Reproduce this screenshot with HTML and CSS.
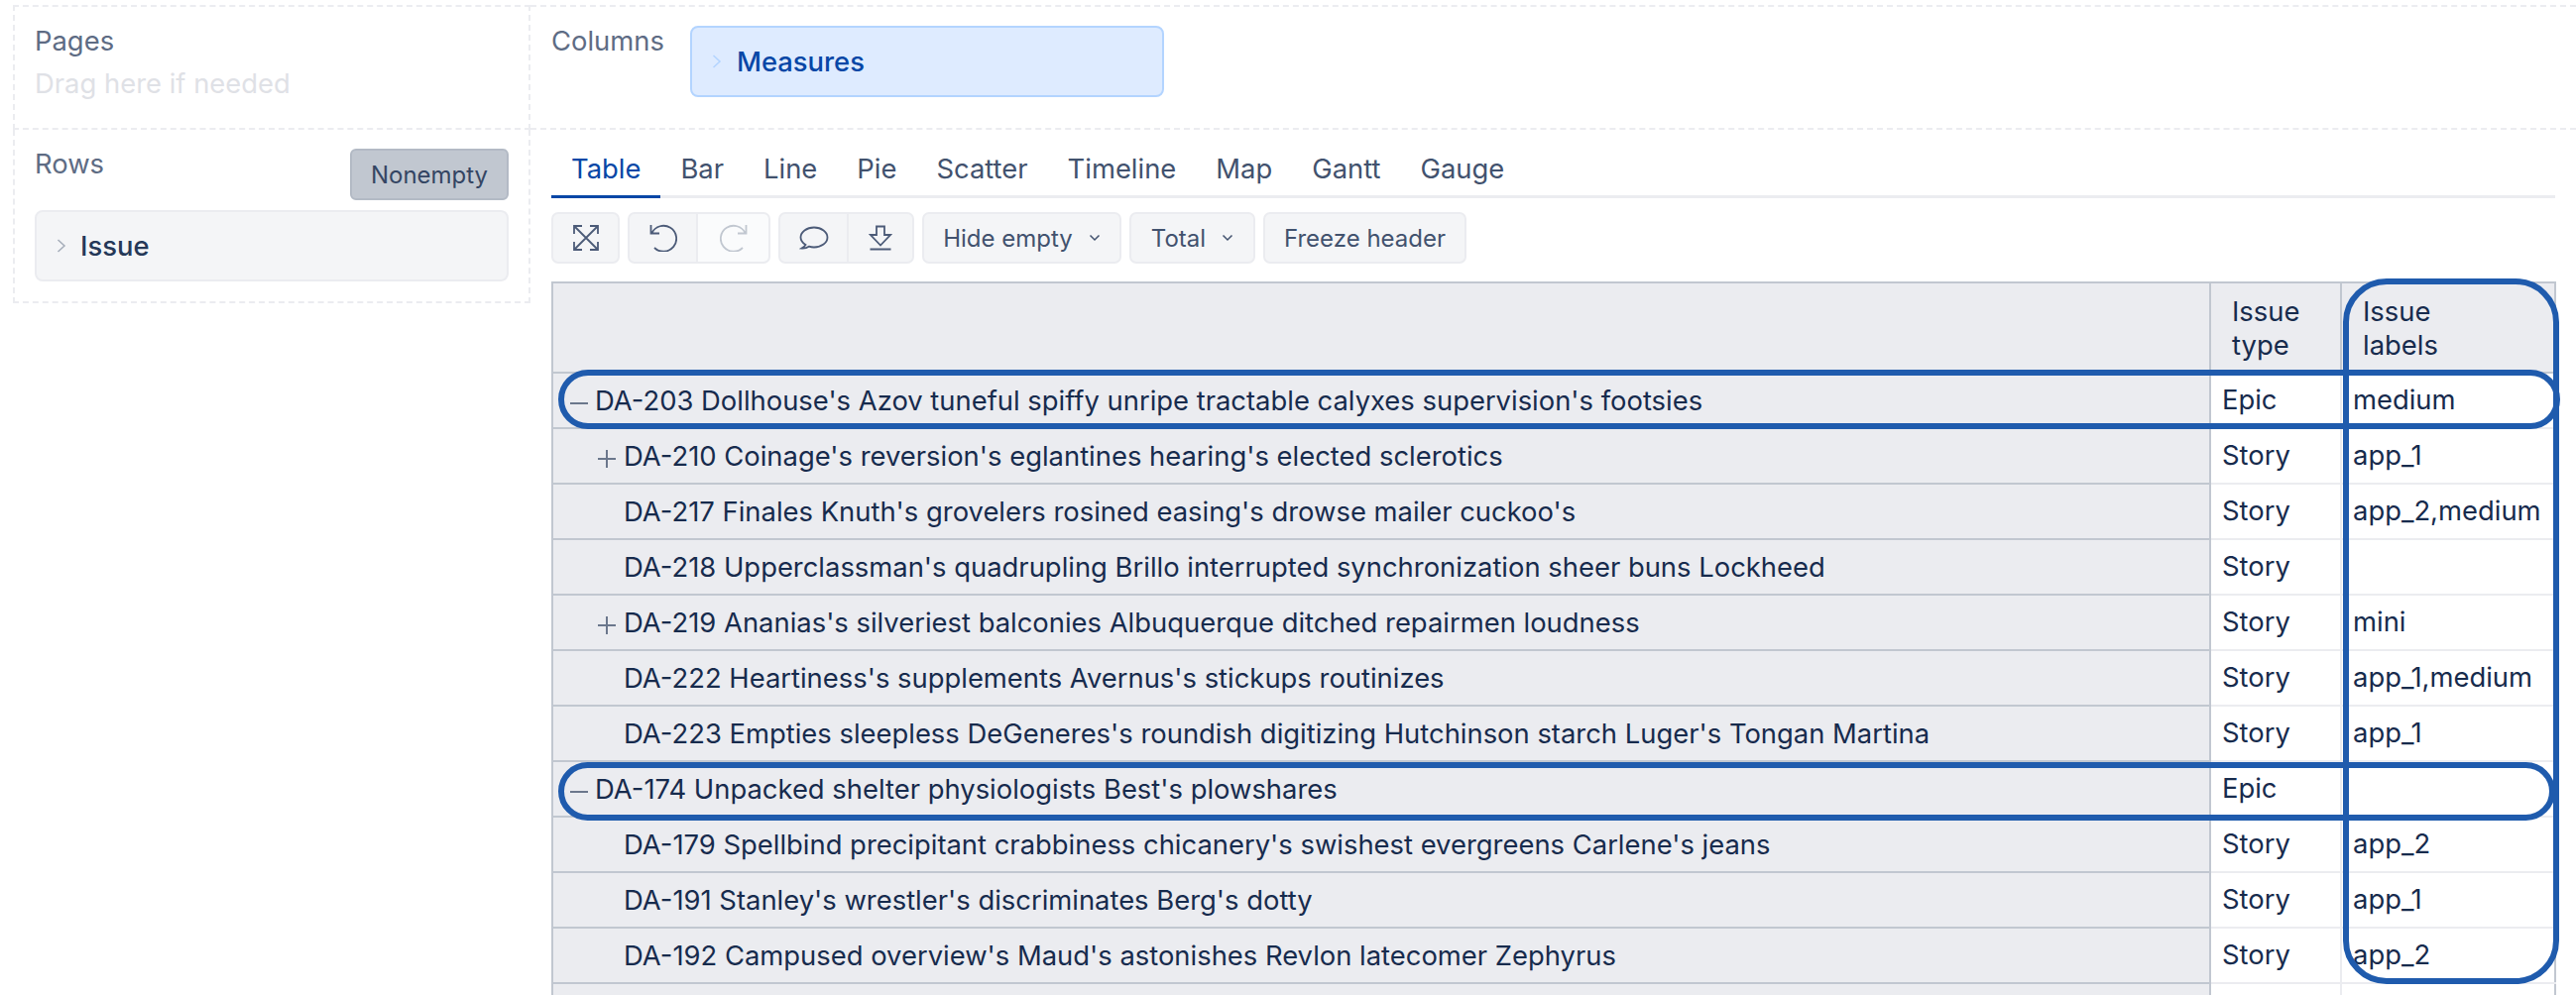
FILE: index.html
```html
<!DOCTYPE html>
<html lang="en">
<head>
<meta charset="utf-8">
<title>Report</title>
<link rel="stylesheet" href="styles.css">
</head>
<body>
<div class="app">
  <section class="zone zone-pages">
    <div class="zone-label">Pages</div>
    <div class="zone-hint">Drag here if needed</div>
  </section>
  <section class="zone zone-columns">
    <div class="zone-label">Columns</div>
    <div class="chip chip-blue">
      <svg class="chev" viewBox="0 0 10 16"><path d="M1.500 2l6.500 6-6.500 6"/></svg>
      <span>Measures</span>
    </div>
  </section>
  <section class="zone zone-rows">
    <div class="rows-head">
      <div class="zone-label">Rows</div>
      <button class="btn-nonempty">Nonempty</button>
    </div>
    <div class="chip chip-grey">
      <svg class="chev" viewBox="0 0 10 16"><path d="M1.500 2l6.500 6-6.500 6"/></svg>
      <span>Issue</span>
    </div>
  </section>
  <main class="content">
    <nav class="tabs">
      <a class="tab active">Table</a><a class="tab">Bar</a><a class="tab">Line</a><a class="tab">Pie</a><a class="tab">Scatter</a><a class="tab">Timeline</a><a class="tab">Map</a><a class="tab">Gantt</a><a class="tab">Gauge</a>
    </nav>
    <div class="toolbar">
      <div class="group">
        <button class="tbtn icon w69"><svg viewBox="0 0 28 28"><path d="M2 2l24 24M26 2L2 26M2 10V2h8M18 2h8v8M2 18v8h8M26 18v8h-8"/></svg></button>
      </div>
      <div class="group">
        <button class="tbtn icon w71"><svg viewBox="0 0 28 28"><path d="M2.500 9A13 13 0 1 1 5 24M1.500 1v8.500H10"/></svg></button>
        <button class="tbtn icon w73 off"><svg viewBox="0 0 28 28"><path d="M25.500 9A13 13 0 1 0 23 24M26.500 1v8.500H18"/></svg></button>
      </div>
      <div class="group">
        <button class="tbtn icon w71"><svg class="wide" viewBox="0 0 30 28"><path d="M6.500 21C3.500 19 1.500 16.500 1.500 13.500c0-5.500 6-10 13.500-10s13.500 4.500 13.500 10-6 10-13.500 10c-1.800 0-3.600-.3-5.200-.8-1.800 1.300-4.300 2-7.300 1.800 1.500-.9 3-2 4-3.500z"/></svg></button>
        <button class="tbtn icon w66"><svg class="slim" viewBox="0 0 24 28"><path d="M8 2.500h8V11h6L12 21.500 2 11h6zM1.500 25.500h21"/></svg></button>
      </div>
      <button class="tbtn text w200">Hide empty<svg class="caret" viewBox="0 0 12 8"><path d="M1.500 1.500L6 6l4.500-4.500"/></svg></button>
      <button class="tbtn text w126">Total<svg class="caret" viewBox="0 0 12 8"><path d="M1.500 1.500L6 6l4.500-4.500"/></svg></button>
      <button class="tbtn text w205">Freeze header</button>
    </div>
    <table class="report">
      <colgroup><col class="c-name"><col class="c-type"><col class="c-labels"></colgroup>
      <thead>
        <tr><th></th><th class="hd">Issue<br>type</th><th class="hd">Issue<br>labels</th></tr>
      </thead>
      <tbody>
        <tr><th class="lvl0"><span class="tog"><svg viewBox="0 0 18 18"><path d="M0 9h18"/></svg></span>DA-203 Dollhouse's Azov tuneful spiffy unripe tractable calyxes supervision's footsies</th><td>Epic</td><td>medium</td></tr>
        <tr><th class="lvl1"><span class="tog"><svg viewBox="0 0 18 18"><path d="M0 9h18M9 0v18"/></svg></span>DA-210 Coinage's reversion's eglantines hearing's elected sclerotics</th><td>Story</td><td>app_1</td></tr>
        <tr><th class="lvl1"><span class="tog"></span>DA-217 Finales Knuth's grovelers rosined easing's drowse mailer cuckoo's</th><td>Story</td><td>app_2,medium</td></tr>
        <tr><th class="lvl1"><span class="tog"></span>DA-218 Upperclassman's quadrupling Brillo interrupted synchronization sheer buns Lockheed</th><td>Story</td><td></td></tr>
        <tr><th class="lvl1"><span class="tog"><svg viewBox="0 0 18 18"><path d="M0 9h18M9 0v18"/></svg></span>DA-219 Ananias's silveriest balconies Albuquerque ditched repairmen loudness</th><td>Story</td><td>mini</td></tr>
        <tr><th class="lvl1"><span class="tog"></span>DA-222 Heartiness's supplements Avernus's stickups routinizes</th><td>Story</td><td>app_1,medium</td></tr>
        <tr><th class="lvl1"><span class="tog"></span>DA-223 Empties sleepless DeGeneres's roundish digitizing Hutchinson starch Luger's Tongan Martina</th><td>Story</td><td>app_1</td></tr>
        <tr><th class="lvl0"><span class="tog"><svg viewBox="0 0 18 18"><path d="M0 9h18"/></svg></span>DA-174 Unpacked shelter physiologists Best's plowshares</th><td>Epic</td><td></td></tr>
        <tr><th class="lvl1"><span class="tog"></span>DA-179 Spellbind precipitant crabbiness chicanery's swishest evergreens Carlene's jeans</th><td>Story</td><td>app_2</td></tr>
        <tr><th class="lvl1"><span class="tog"></span>DA-191 Stanley's wrestler's discriminates Berg's dotty</th><td>Story</td><td>app_1</td></tr>
        <tr><th class="lvl1"><span class="tog"></span>DA-192 Campused overview's Maud's astonishes Revlon latecomer Zephyrus</th><td>Story</td><td>app_2</td></tr>
        <tr><th class="lvl1"></th><td></td><td></td></tr>
      </tbody>
    </table>
  </main>
</div>
<div class="ring ring-a"></div>
<div class="ring ring-b"></div>
<div class="ring ring-c"></div>
</body>
</html>
```
FILE: styles.css
```css
* { box-sizing: border-box; }
html, body { margin: 0; height: 100%; overflow: hidden; background: #fff; }
body { font-family: Inter, "Liberation Sans", sans-serif; font-size: 27.4px; color: #172b4d; position: relative; }
.app { display: grid; grid-template-columns: 522px 1fr; grid-template-rows: 126px 1fr; padding: 5px 0 0 13px; height: 100%; }
.zone { border: 2px dashed #ebecf0; }
.zone-pages { padding: 17px 0 0 20px; }
.zone-columns { border-width: 2px 0 2px 0; display: flex; gap: 26px; padding: 17px 0 0 21px; }
.zone-rows { height: 175px; border-top: 0; padding: 19px 20px 0 20px; }
.zone-label { font-size: 27.4px; line-height: 34px; color: #5e6c84; }
.zone-rows .zone-label { margin-top: -2px; }
.zone-hint { font-size: 27.4px; line-height: 34px; margin-top: 9px; color: #dfe1e6; }
.chip { display: flex; align-items: center; font-weight: 500; border-radius: 8px; border: 2px solid; padding-left: 20px; gap: 15px; }
.zone-columns .chip { margin-top: 2px; }
.chip-blue { width: 478px; height: 72px; background: #deebff; border-color: #b3d4ff; color: #0747a6; }
.chip-grey { height: 72px; margin-top: 10px; background: #f4f5f7; border-color: #ebecf0; color: #253858; gap: 14px; }
.chev { width: 10px; height: 16px; fill: none; stroke: #a5adba; stroke-width: 1.500; }
.chip-blue .chev { stroke: #b3d4ff; }
.rows-head { display: flex; justify-content: space-between; height: 52px; }
.btn-nonempty { width: 160px; height: 52px; background: #c1c7d0; border: 2px solid #b3bac5; border-radius: 6px; font: 400 24px Inter, sans-serif; color: #344563; padding: 0; }
.content { grid-column: 2; grid-row: 2; padding: 0 21px 0 21px; min-width: 0; }
.tabs { display: flex; height: 69px; padding-top: 23px; border-bottom: 3px solid #ebecf0; }
.tab { height: 46px; padding: 0 20px; font-size: 27.4px; line-height: 32px; color: #42526e; margin-bottom: -3px; border-bottom: 3px solid transparent; }
.tab.active { color: #0747a6; border-bottom-color: #0747a6; }
.toolbar { display: flex; gap: 8px; margin-top: 14px; height: 52px; }
.group { display: flex; }
.tbtn { height: 52px; background: #f4f5f7; border: 2px solid #ebecf0; border-radius: 7px; padding: 0; color: #42526e; font: 400 24px Inter, sans-serif; display: flex; align-items: center; justify-content: center; }
.group .tbtn + .tbtn { border-left: 0; border-top-left-radius: 0; border-bottom-left-radius: 0; }
.group .tbtn:not(:last-child) { border-top-right-radius: 0; border-bottom-right-radius: 0; }
.icon svg { width: 28px; height: 28px; fill: none; stroke: #4c5b78; stroke-width: 1.800; }
.icon svg.wide { width: 30px; }
.icon svg.slim { width: 24px; }
.off { background: #fafbfc; }
.icon.off svg { stroke: #c1c7d0; }
.w69 { width: 69px; } .w71 { width: 71px; } .w73 { width: 73px; } .w66 { width: 66px; }
.w200 { width: 201px; gap: 16px; } .w126 { width: 127px; gap: 16px; } .w205 { width: 205px; }
.caret { width: 12px; height: 8px; fill: none; stroke: #42526e; stroke-width: 1.500; }
.report { table-layout: fixed; width: 2020px; border-collapse: collapse; margin-top: 18px; font-size: 27.4px; border: 2px solid #c1c7d0; }
.c-name { width: 1672px; } .c-type { width: 132px; } .c-labels { width: 216px; }
.report th, .report td { height: 56px; padding: 0; font-weight: 400; text-align: left; vertical-align: middle; white-space: nowrap; line-height: 34px; }
.report tbody th { background: #ebecf0; border: 2px solid #c1c7d0; border-left: 0; }
.report thead th { height: 91px; background: #ebecf0; border: 2px solid #c1c7d0; }
.report thead .hd { padding-left: 21px; }
.report td { padding: 0 0 2px 11px; background: #fff; border: 2px solid #ebecf0; }
.report td:last-child { border-right: 2px solid #c1c7d0; }
.report .lvl0 { padding-left: 17px; }
.report .lvl1 { padding-left: 45px; }
.lvl0 .tog { width: 25px; }
.tog { display: inline-block; width: 26px; vertical-align: -2px; }
.tog svg { display: block; width: 18px; height: 18px; fill: none; stroke: #6b778c; stroke-width: 2; }
.ring { position: absolute; border: 6px solid #1f5bad; pointer-events: none; }
.ring-a { left: 563px; top: 373px; width: 2019px; height: 60px; border-radius: 30px; }
.ring-b { left: 563px; top: 769px; width: 2014px; height: 59px; border-radius: 30px; }
.ring-c { left: 2363px; top: 281px; width: 218px; height: 712px; border-radius: 44px; }
```
